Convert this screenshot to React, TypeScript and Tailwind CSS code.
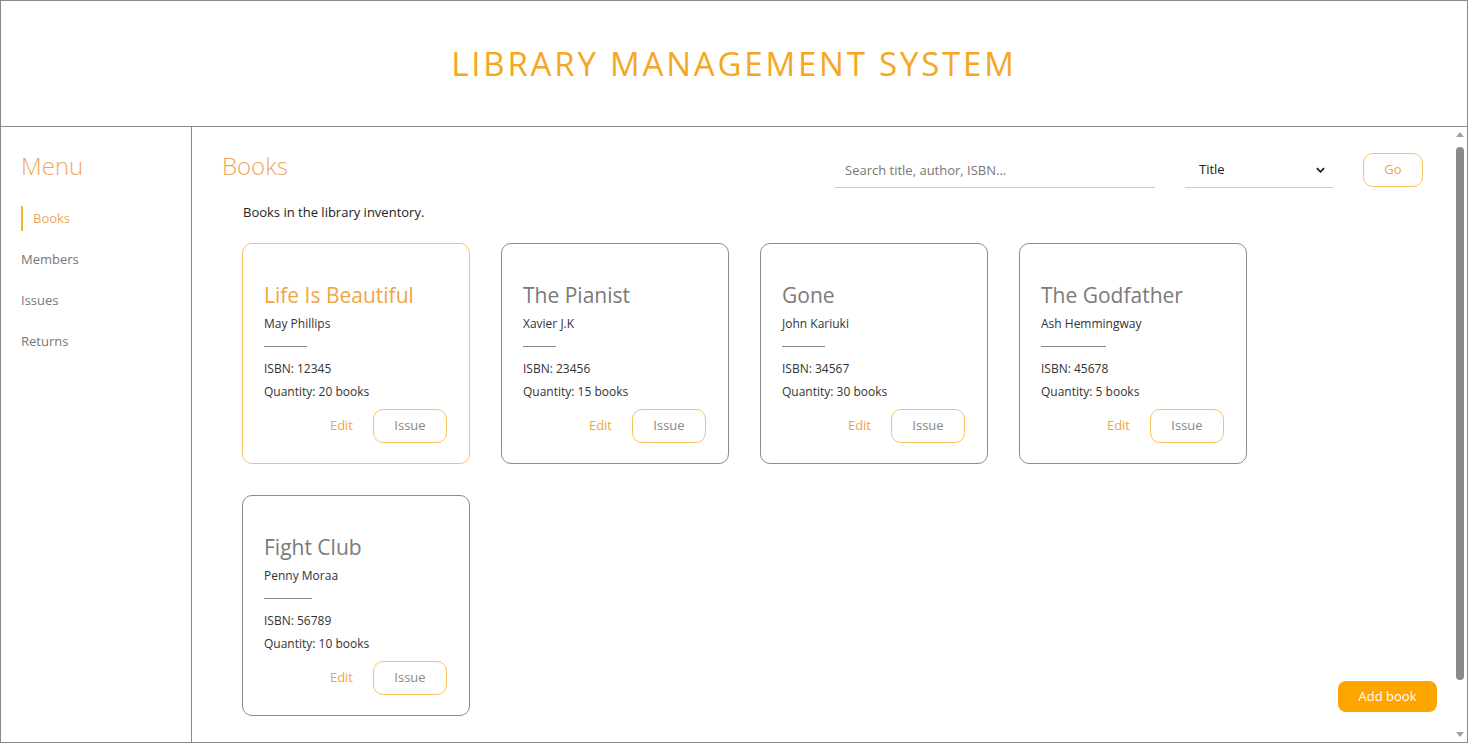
import React from 'react';

interface Book {
  title: string;
  author: string;
  isbn: string;
  quantity: number;
}

const books: Book[] = [
  { title: 'Life Is Beautiful', author: 'May Phillips', isbn: '12345', quantity: 20 },
  { title: 'The Pianist', author: 'Xavier J.K', isbn: '23456', quantity: 15 },
  { title: 'Gone', author: 'John Kariuki', isbn: '34567', quantity: 30 },
  { title: 'The Godfather', author: 'Ash Hemmingway', isbn: '45678', quantity: 5 },
  { title: 'Fight Club', author: 'Penny Moraa', isbn: '56789', quantity: 10 },
];

const menu = ['Books', 'Members', 'Issues', 'Returns'];

function BookCard({ book, active }: { book: Book; active: boolean }) {
  return (
    <div
      className={`w-[228px] h-[221px] rounded-[10px] border px-[21px] pt-[37px] flex flex-col ${
        active ? 'border-[#f7c463]' : 'border-[#8c8c8c]'
      }`}
    >
      <h3
        className={`text-[21px] leading-[28px] ${
          active ? 'text-[#f2a53e]' : 'text-[#7a7a7a]'
        }`}
      >
        {book.title}
      </h3>
      <div className="inline-flex flex-col self-start">
        <p className="text-[12px] leading-[16px] text-[#333] mt-[7px]">{book.author}</p>
        <div className="w-[65%] border-t border-[#888] mt-[14px]" />
      </div>
      <p className="text-[12px] text-[#333] mt-[14px] leading-[16px]">ISBN: {book.isbn}</p>
      <p className="text-[12px] text-[#333] mt-[7px] leading-[16px]">
        Quantity: {book.quantity} books
      </p>
      <div className="flex justify-end items-center mt-[9px] gap-[20px] pr-[1px]">
        <button className="text-[13px] text-[#f2a53e]">Edit</button>
        <button className="w-[74px] h-[34px] rounded-[10px] border border-[#f7c463] text-[13px] text-[#888]">
          Issue
        </button>
      </div>
    </div>
  );
}

function Scrollbar() {
  return (
    <div className="w-[15px] shrink-0 flex flex-col items-center bg-white">
      <div className="h-[15px] flex items-center justify-center">
        <div className="w-0 h-0 border-l-[4px] border-r-[4px] border-b-[5px] border-l-transparent border-r-transparent border-b-[#a3a3a3]" />
      </div>
      <div className="flex-1 w-full px-[3.5px] pt-[5px] pb-[47px]">
        <div className="h-full w-full rounded-full bg-[#8a8a8a]" />
      </div>
      <div className="h-[15px] flex items-center justify-center">
        <div className="w-0 h-0 border-l-[4px] border-r-[4px] border-t-[5px] border-l-transparent border-r-transparent border-t-[#a3a3a3]" />
      </div>
    </div>
  );
}

export default function App() {
  return (
    <div
      className="h-[743px] w-full flex flex-col border border-[#8a8a8a] bg-white overflow-hidden"
      style={{ fontFamily: '"Open Sans", sans-serif' }}
    >
      {/* Header */}
      <header className="h-[126px] shrink-0 border-b border-[#8a8a8a] flex items-center justify-center">
        <h1 className="text-[33px] tracking-[2.8px] text-[#f5a623] font-medium">
          LIBRARY MANAGEMENT SYSTEM
        </h1>
      </header>

      <div className="flex flex-1 min-h-0">
        {/* Sidebar */}
        <aside className="w-[191px] shrink-0 border-r border-[#8a8a8a] pl-[20px] pt-[23px]">
          <h2 className="text-[24px] font-light text-[#f0a860] leading-[32px]">Menu</h2>
          <nav className="mt-[24px] flex flex-col gap-[16px]">
            {menu.map((item, i) => (
              <a
                key={item}
                className={`text-[13px] leading-[25px] ${
                  i === 0
                    ? 'border-l-2 border-[#f2b533] pl-[10px] text-[#f0a860]'
                    : 'text-[#777]'
                }`}
              >
                {item}
              </a>
            ))}
          </nav>
        </aside>

        {/* Main */}
        <div className="flex-1 min-w-0 flex">
          <main className="flex-1 min-w-0 overflow-hidden relative">
            <div className="pl-[29px] pr-[29px] pt-[23px]">
              <div className="flex items-start">
                <h2 className="text-[24px] font-light text-[#f0a860] leading-[32px] pl-[1px]">Books</h2>
                <div className="ml-auto flex items-center mt-[2px]">
                  <input
                    placeholder="Search title, author, ISBN..."
                    className="w-[320px] h-[36px] border-b border-[#ccc] px-[10px] text-[13px] outline-none placeholder:text-[#777]"
                    style={{ fontFamily: '"Open Sans", sans-serif' }}
                  />
                  <div className="relative ml-[30px] w-[148px] h-[36px] border-b border-[#ccc] flex items-center pl-[14px] text-[13px] text-[#222]">
                    Title
                    <svg
                      viewBox="0 0 10 6"
                      className="absolute right-[8px] top-[15px] w-[9px] h-[6px]"
                    >
                      <path d="M1 1 L5 5 L9 1" stroke="#222" strokeWidth="2" fill="none" />
                    </svg>
                  </div>
                  <button className="ml-[30px] w-[60px] h-[34px] rounded-[10px] border border-[#f7c463] text-[13px] text-[#f2a53e]">
                    Go
                  </button>
                </div>
              </div>

              <p className="mt-[15px] ml-[22px] text-[13px] text-[#222] leading-[18px]">
                Books in the library inventory.
              </p>

              <div className="mt-[22px] ml-[21px] flex flex-wrap gap-[31px] w-[1010px]">
                {books.map((b, i) => (
                  <BookCard key={b.title} book={b} active={i === 0} />
                ))}
              </div>
            </div>

            <button className="absolute right-[15px] top-[554px] w-[99px] h-[31px] rounded-[8px] bg-[#ffa500] text-white text-[13px]">
              Add book
            </button>
          </main>
          <Scrollbar />
        </div>
      </div>
    </div>
  );
}
